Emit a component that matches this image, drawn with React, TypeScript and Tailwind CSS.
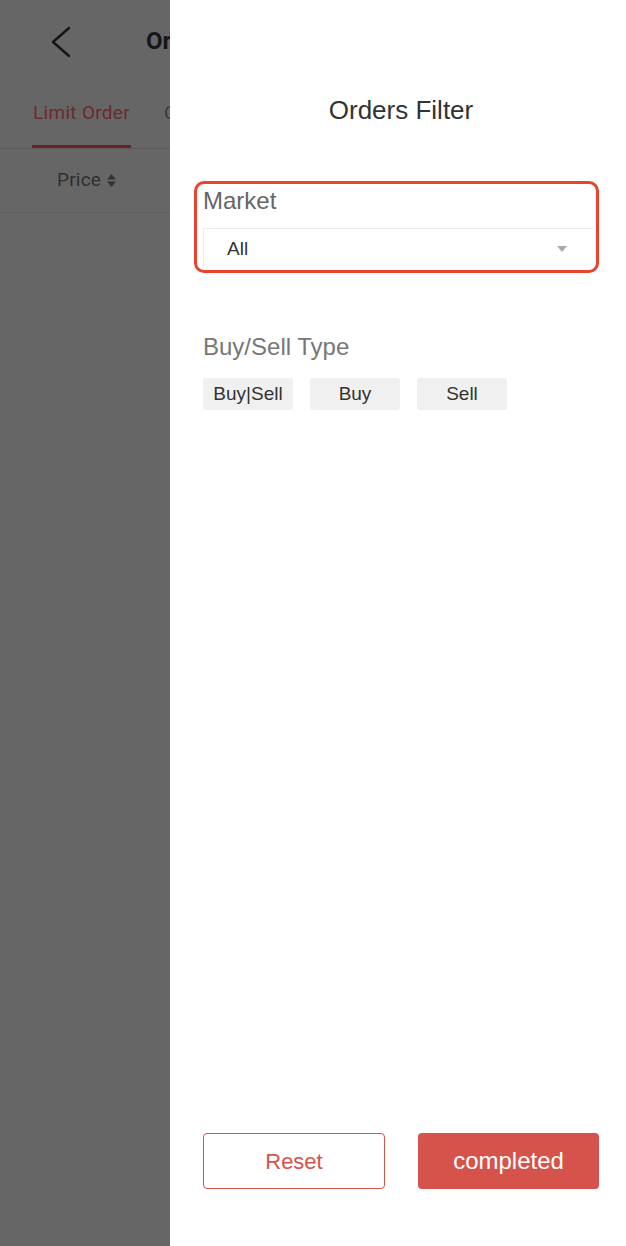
import { ReactNode } from 'react'

// ─── Dimmed page behind the drawer ──────────────────────────────────

function BackPage() {
  return (
    <div className="w-[170px] shrink-0 overflow-hidden bg-[#666666] font-['Roboto',sans-serif]">
      <div className="w-[626px]">
        {/* Header */}
        <div className="flex h-[84px] items-center">
          <svg className="ml-[50px]" width="22" height="32" viewBox="0 0 22 32" fill="none" aria-hidden="true">
            <polyline
              points="19,2 3,16 19,30"
              stroke="#151515"
              strokeWidth="2.4"
              strokeLinecap="round"
              strokeLinejoin="round"
            />
          </svg>
          <span className="ml-[74px] -mt-[2px] text-[24px] font-bold leading-none text-[#161616]">Orders</span>
        </div>

        {/* Tabs */}
        <div className="flex h-[65px] items-stretch border-b border-[#5c5c5c]">
          <div className="ml-[32px] flex w-[99px] flex-col items-center">
            <span className="mt-[15px] text-[19px] leading-[28px] tracking-[0.3px] text-[#6e2a2f]">Limit Order</span>
            <div className="mt-auto h-[3px] w-full bg-[#6a2126]" />
          </div>
          <span className="ml-[33px] mt-[15px] text-[19px] leading-[28px] text-[#3a3a3a]">Conditional</span>
        </div>

        {/* Column heads */}
        <div className="flex h-[64px] items-center border-b border-[#5f5f5f]">
          <span className="ml-[57px] text-[19px] tracking-[0.2px] text-[#2f2f2f]">Price</span>
          <svg className="ml-[6px]" width="9" height="13" viewBox="0 0 9 13" aria-hidden="true">
            <polygon points="4.5,0 9,5.5 0,5.5" fill="#333" />
            <polygon points="0,7.5 9,7.5 4.5,13" fill="#333" />
          </svg>
        </div>
      </div>
    </div>
  )
}

// ─── Drawer ─────────────────────────────────────────────────────────

function Chip({ children }: { children: ReactNode }) {
  return (
    <div className="flex h-[32px] w-[90px] items-center justify-center rounded-[3px] bg-[#f0f0f0] text-[19px] text-[#333333]">
      {children}
    </div>
  )
}

function FilterDrawer() {
  return (
    <div className="flex flex-1 flex-col bg-white pl-[33px] pr-[27px] font-['Liberation_Sans',Arial,sans-serif]">
      <h1 className="mt-[94px] text-center text-[26px] leading-[32px] text-[#333333]">Orders Filter</h1>

      {/* Market — highlighted */}
      <div className="mt-[55px] -ml-[9px] rounded-[10px] border-[3px] border-[#e8432e] pl-[6px] pt-[3px] pb-[1px] pr-[2px]">
        <div className="text-[24px] leading-[28px] text-[#666666]">Market</div>
        <div className="mt-[13px] flex h-[41px] items-center justify-between border-l border-t border-[#ececec] pl-[23px] pr-[27px]">
          <span className="text-[19px] text-[#333333]">All</span>
          <svg width="10" height="6" viewBox="0 0 10 6" aria-hidden="true">
            <polygon points="0,0 10,0 5,6" fill="#aaaaaa" />
          </svg>
        </div>
      </div>

      {/* Buy/Sell type */}
      <div className="mt-[60px] text-[24px] leading-[28px] text-[#777777]">Buy/Sell Type</div>
      <div className="mt-[17px] flex gap-[17px]">
        <Chip>Buy|Sell</Chip>
        <Chip>Buy</Chip>
        <Chip>Sell</Chip>
      </div>

      {/* Actions */}
      <div className="mt-auto mb-[57px] flex gap-[33px]">
        <button className="flex h-[56px] w-[182px] items-center justify-center rounded-[4px] border border-[#d6534c] bg-white text-[22px] text-[#d6534c]">
          Reset
        </button>
        <button className="flex h-[56px] w-[181px] items-center justify-center rounded-[4px] bg-[#d6534c] text-[24px] text-white">
          completed
        </button>
      </div>
    </div>
  )
}

export default function App() {
  return (
    <div className="flex h-[1246px] w-[626px] overflow-hidden">
      <BackPage />
      <FilterDrawer />
    </div>
  )
}
